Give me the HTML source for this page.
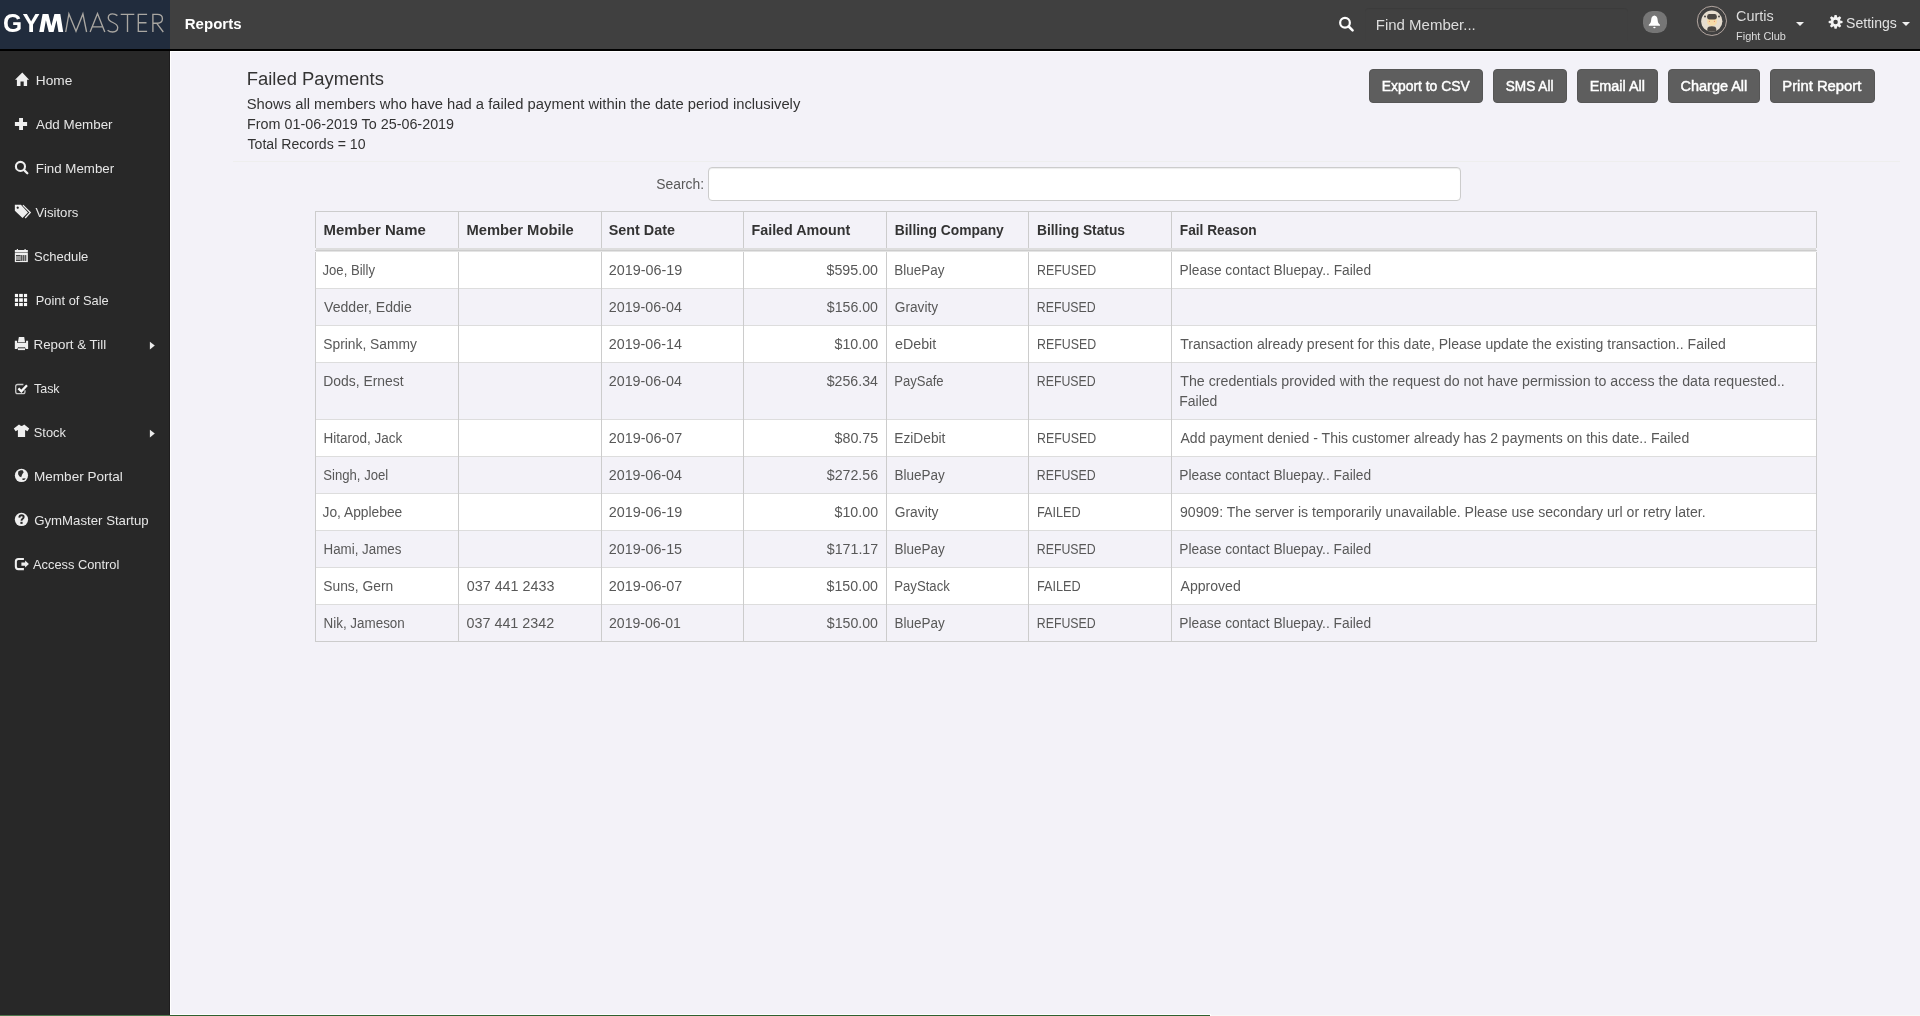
<!DOCTYPE html>
<html lang="en"><head><meta charset="utf-8"><title>GymMaster - Reports</title>
<style>
html,body{margin:0;padding:0;}
body{width:1920px;height:1016px;overflow:hidden;position:relative;background:#f3f2f8;font-family:"Liberation Sans",sans-serif;}
.bx{position:absolute;}
.t{position:absolute;white-space:nowrap;line-height:20px;transform-origin:0 0;font-family:"Liberation Sans",sans-serif;}
.btn{position:absolute;top:69px;height:34px;background:#5e5e5e;border:1px solid #565656;box-sizing:border-box;border-radius:4px;}
svg{position:absolute;overflow:visible;}
</style></head><body>
<!-- top bar -->
<div class="bx" style="left:0;top:0;width:1920px;height:49px;background:#404040"></div>
<div class="bx" style="left:0;top:0;width:170px;height:49px;background:#212c3d"></div>
<div class="bx" style="left:0;top:49px;width:1920px;height:2px;background:#000"></div>
<!-- sidebar -->
<div class="bx" style="left:0;top:51px;width:170px;height:965px;background:#282828"></div>
<div class="bx" style="left:169px;top:51px;width:1px;height:965px;background:#1e1d1e"></div>
<!-- content edges -->
<div class="bx" style="left:170px;top:51px;width:1750px;height:1px;background:#fff"></div>
<div class="bx" style="left:170px;top:51px;width:1px;height:965px;background:#fff"></div>
<!-- bottom strip -->
<div class="bx" style="left:170px;top:1014px;width:1041px;height:1px;background:#fff"></div>
<div class="bx" style="left:1211px;top:1015px;width:709px;height:1px;background:#f8f8f6"></div>
<div class="bx" style="left:0;top:1015px;width:170px;height:1px;background:#4d774d"></div>
<div class="bx" style="left:170px;top:1015px;width:1040px;height:1px;background:#2f5f2f"></div>
<div class="bx" style="left:1210px;top:1015px;width:1px;height:1px;background:#fff"></div>
<!-- hr -->
<div class="bx" style="left:233px;top:161px;width:1667px;height:1px;background:#eee"></div>
<!-- buttons -->
<div class="btn" style="left:1369px;width:114px"></div>
<div class="btn" style="left:1493px;width:74px"></div>
<div class="btn" style="left:1577px;width:81px"></div>
<div class="btn" style="left:1668px;width:92px"></div>
<div class="btn" style="left:1770px;width:105px"></div>
<!-- search input -->
<div class="bx" style="left:708px;top:167px;width:751px;height:32px;background:#fff;border:1px solid #ccc;border-radius:4px;box-shadow:inset 0 1px 1px rgba(0,0,0,.075)"></div>
<div class="bx" id="findbox" style="left:1365px;top:8px;width:263px;height:34px;border-radius:4px;box-shadow:inset 0 1px 1px rgba(0,0,0,.075)"></div>
<!-- bell -->
<div class="bx" style="left:1643px;top:11px;width:24px;height:22px;background:#767676;border-radius:9.5px"></div>
<!-- table -->
<div class="bx" style="left:316px;top:252px;width:1500px;height:36px;background:#fff"></div>
<div class="bx" style="left:316px;top:326px;width:1500px;height:36px;background:#fff"></div>
<div class="bx" style="left:316px;top:420px;width:1500px;height:36px;background:#fff"></div>
<div class="bx" style="left:316px;top:494px;width:1500px;height:36px;background:#fff"></div>
<div class="bx" style="left:316px;top:568px;width:1500px;height:36px;background:#fff"></div>
<div class="bx" style="left:315px;top:211px;width:1502px;height:1px;background:#ccc"></div>
<div class="bx" style="left:316px;top:248px;width:1500px;height:2px;background:#ddd"></div>
<div class="bx" style="left:315px;top:250px;width:1502px;height:1px;background:#ccc"></div>
<div class="bx" style="left:316px;top:251px;width:1500px;height:1px;background:#e4e4e4"></div>
<div class="bx" style="left:316px;top:288px;width:1500px;height:1px;background:#ddd"></div>
<div class="bx" style="left:316px;top:325px;width:1500px;height:1px;background:#ddd"></div>
<div class="bx" style="left:316px;top:362px;width:1500px;height:1px;background:#ddd"></div>
<div class="bx" style="left:316px;top:419px;width:1500px;height:1px;background:#ddd"></div>
<div class="bx" style="left:316px;top:456px;width:1500px;height:1px;background:#ddd"></div>
<div class="bx" style="left:316px;top:493px;width:1500px;height:1px;background:#ddd"></div>
<div class="bx" style="left:316px;top:530px;width:1500px;height:1px;background:#ddd"></div>
<div class="bx" style="left:316px;top:567px;width:1500px;height:1px;background:#ddd"></div>
<div class="bx" style="left:316px;top:604px;width:1500px;height:1px;background:#ddd"></div>
<div class="bx" style="left:315px;top:641px;width:1502px;height:1px;background:#ccc"></div>
<div class="bx" style="left:315px;top:211px;width:1px;height:37px;background:#ccc"></div>
<div class="bx" style="left:315px;top:252px;width:1px;height:389px;background:#ccc"></div>
<div class="bx" style="left:458px;top:211px;width:1px;height:37px;background:#ccc"></div>
<div class="bx" style="left:458px;top:252px;width:1px;height:389px;background:#ccc"></div>
<div class="bx" style="left:601px;top:211px;width:1px;height:37px;background:#ccc"></div>
<div class="bx" style="left:601px;top:252px;width:1px;height:389px;background:#ccc"></div>
<div class="bx" style="left:743px;top:211px;width:1px;height:37px;background:#ccc"></div>
<div class="bx" style="left:743px;top:252px;width:1px;height:389px;background:#ccc"></div>
<div class="bx" style="left:886px;top:211px;width:1px;height:37px;background:#ccc"></div>
<div class="bx" style="left:886px;top:252px;width:1px;height:389px;background:#ccc"></div>
<div class="bx" style="left:1028px;top:211px;width:1px;height:37px;background:#ccc"></div>
<div class="bx" style="left:1028px;top:252px;width:1px;height:389px;background:#ccc"></div>
<div class="bx" style="left:1171px;top:211px;width:1px;height:37px;background:#ccc"></div>
<div class="bx" style="left:1171px;top:252px;width:1px;height:389px;background:#ccc"></div>
<div class="bx" style="left:1816px;top:211px;width:1px;height:37px;background:#ccc"></div>
<div class="bx" style="left:1816px;top:252px;width:1px;height:389px;background:#ccc"></div>
<div id="fg" style="position:absolute;left:0;top:0;width:1920px;height:1016px;will-change:transform">
<svg width="1920" height="1016" viewBox="0 0 1920 1016" style="left:0;top:0">
<text transform="translate(3.04,32.45) scale(0.925,1)" font-family="Liberation Sans, sans-serif" font-weight="700" font-size="26.6" fill="#fff">G</text>
<text transform="translate(22.38,32.0) scale(1.023,1)" font-family="Liberation Sans, sans-serif" font-weight="700" font-size="25.3" fill="#fff">Y</text>
<path d="M39.2 32 L42.6 13.9 L48.4 13.9 L51.35 25.9 L54.4 13.9 L60.3 13.9 L63.2 32 L58.5 32 L56.5 20.3 L53.6 32 L48.8 32 L45.9 20.3 L43.8 32 Z" fill="#fff"/>
<g fill="none" stroke="#aaa7a2" stroke-width="1.35" stroke-linejoin="miter" stroke-linecap="butt">
<path d="M65.7 32 L68.9 13.9 L76 31.2 L82.9 13.9 L86.6 32"/>
<path d="M90.1 32 L97.5 13.6 L104.8 32 M92.4 26.9 H102.6"/>
<path d="M117.4 15.6 C115.9 14.4 114.3 13.9 112.6 13.9 C109.9 13.9 108.3 15.6 108.3 17.8 C108.3 20.3 110.2 21.4 112.8 22.5 C115.8 23.8 117.7 24.9 117.7 27.6 C117.7 30.3 115.6 32 112.7 32 C110.7 32 108.9 31.3 107.6 30.2"/>
<path d="M120.7 14.4 H134.3 M127.5 14.4 V32"/>
<path d="M147.1 14.4 H138.3 V31.4 H147.1 M138.3 22.7 H146.5"/>
<path d="M152.9 32 V14.4 H157.4 C160.6 14.4 162.4 16 162.4 18.8 C162.4 21.6 160.4 23.2 157.4 23.2 H152.9 M156.6 23.2 L163.3 32"/>
</g>
<circle cx="1345" cy="22.8" r="4.85" fill="none" stroke="#fff" stroke-width="2.2"/>
<path d="M1348.7 26.5 L1352.6 30.4" stroke="#fff" stroke-width="2.5" stroke-linecap="round" fill="none"/>
<path d="M1654.4 15.5 C1652.5 15.7 1651.3 17.4 1651.2 19.5 C1651.1 22 1650.4 23.6 1648.8 24.8 L1648.8 25.8 L1660 25.8 L1660 24.8 C1658.4 23.6 1657.7 22 1657.6 19.5 C1657.5 17.4 1656.3 15.7 1654.4 15.5 Z" fill="#fff"/>
<ellipse cx="1654.4" cy="27.5" rx="1.2" ry="0.7" fill="#fff"/>
<circle cx="1711.9" cy="20.9" r="14.6" fill="none" stroke="#b4a7a1" stroke-width="1"/>
<clipPath id="av"><circle cx="1711.8" cy="21.2" r="10.6"/></clipPath>
<g clip-path="url(#av)"><rect x="1700" y="9" width="24" height="24" fill="#e6ddcf"/>
<path d="M1707.2 19 H1716.8 V22.5 C1716.8 24 1714.5 25.8 1712 25.8 C1709.5 25.8 1707.2 24 1707.2 22.5 Z" fill="#f6dba8"/>
<rect x="1707.2" y="14.1" width="9.6" height="5.4" rx="2.2" fill="#4b4743"/>
<circle cx="1705" cy="16.4" r="1" fill="#4b4743"/><circle cx="1719" cy="16.4" r="1" fill="#4b4743"/>
<circle cx="1709.4" cy="21.3" r="0.55" fill="#ec6a55" opacity="0.85"/><circle cx="1714.4" cy="21.3" r="0.55" fill="#ec6a55" opacity="0.85"/>
<path d="M1707.3 33 V29 C1707.3 27 1709.3 26.3 1711.8 26.3 C1714.3 26.3 1716.3 27 1716.3 29 V33 Z" fill="#4b4743"/></g>
<path d="M1796 22 H1804 L1800 26 Z" fill="#f0f0f0"/>
<path d="M1902 22 H1910 L1906 26 Z" fill="#f0f0f0"/>
<path d="M1834.03 17.36 L1834.55 15.03 L1836.65 15.03 L1837.17 17.36 L1837.73 17.59 L1839.75 16.32 L1841.23 17.80 L1839.96 19.82 L1840.19 20.38 L1842.52 20.90 L1842.52 23.00 L1840.19 23.52 L1839.96 24.08 L1841.23 26.10 L1839.75 27.58 L1837.73 26.31 L1837.17 26.54 L1836.65 28.87 L1834.55 28.87 L1834.03 26.54 L1833.47 26.31 L1831.45 27.58 L1829.97 26.10 L1831.24 24.08 L1831.01 23.52 L1828.68 23.00 L1828.68 20.90 L1831.01 20.38 L1831.24 19.82 L1829.97 17.80 L1831.45 16.32 L1833.47 17.59 Z M1837.85 21.95 A2.25 2.25 0 1 0 1833.35 21.95 A2.25 2.25 0 1 0 1837.85 21.95 Z" fill="#f4f4f4" fill-rule="evenodd"/>
<path d="M22.3 72.5 L29.1 79.7 L27.1 79.7 L27.1 86.1 L23.7 86.1 L23.7 81.6 L20.5 81.6 L20.5 86.1 L16.9 86.1 L16.9 79.7 L15 79.7 Z" fill="#efefef"/>
<path d="M19.1 118 H23 V122 H27.1 V126 H23 V130 H19.1 V126 H14.9 V122 H19.1 Z" fill="#efefef"/>
<circle cx="20.45" cy="166.4" r="4.55" fill="none" stroke="#efefef" stroke-width="2.1"/>
<path d="M23.9 169.9 L27.3 173.3" stroke="#efefef" stroke-width="2.3" stroke-linecap="round" fill="none"/>
<path d="M14.85 204.85 H20.9 L27.95 212.5 L22.5 218.1 L14.85 210.7 Z M17.7 206.5 a1.1 1.1 0 1 0 0.01 0 Z" fill="#efefef" fill-rule="evenodd"/>
<path d="M22.9 205.1 L30.3 212.5 L25.2 218" fill="none" stroke="#efefef" stroke-width="1.25"/>
<path d="M14.85 250 H16.8 V249 H18 V250 H24.5 V249 H25.7 V250 H27.85 V252 H14.85 Z" fill="#efefef"/>
<rect x="14.85" y="252" width="13" height="0.9" fill="#8c8c8c"/>
<rect x="14.85" y="252.9" width="13" height="9.2" fill="#efefef"/>
<rect x="16" y="255.1" width="10.6" height="5.8" fill="#9a9a9a"/>
<rect x="21.0" y="255.1" width="0.8" height="5.8" fill="#444"/>
<rect x="23.05" y="255.1" width="0.8" height="5.8" fill="#444"/>
<rect x="25.1" y="255.1" width="0.8" height="5.8" fill="#444"/>
<rect x="16" y="255.1" width="4.4" height="0.9" fill="#3a3a3a"/><rect x="16" y="260" width="4.4" height="0.9" fill="#3a3a3a"/>
<rect x="14.9" y="293.9" width="3.15" height="3.20" fill="#fafafa"/>
<rect x="14.9" y="298.25" width="3.15" height="3.60" fill="#fafafa"/>
<rect x="14.9" y="302.95" width="3.15" height="3.15" fill="#fafafa"/>
<rect x="19.15" y="293.9" width="3.70" height="3.20" fill="#fafafa"/>
<rect x="19.15" y="298.25" width="3.70" height="3.60" fill="#fafafa"/>
<rect x="19.15" y="302.95" width="3.70" height="3.15" fill="#fafafa"/>
<rect x="23.95" y="293.9" width="3.15" height="3.20" fill="#fafafa"/>
<rect x="23.95" y="298.25" width="3.15" height="3.60" fill="#fafafa"/>
<rect x="23.95" y="302.95" width="3.15" height="3.15" fill="#fafafa"/>
<path d="M18.9 337 H24.2 L25 341.9 H17.9 Z" fill="#efefef"/>
<path d="M17.5 342 H25.6 V342.9 H17.5 Z" fill="#7a7a7a"/>
<path d="M14.85 340.8 H17.1 V342.9 H26.05 V340.8 H28.1 V349 H25.7 L24.9 347 H18.1 L17.3 349 H14.85 Z" fill="#efefef"/>
<path d="M18.2 347 H24.8 V347.9 H18.2 Z" fill="#7a7a7a"/>
<path d="M17.9 348.3 H25 V350.1 H17.9 Z" fill="#efefef"/>
<path d="M23.4 384.5 H17.6 Q15.7 384.5 15.7 386.4 V391.7 Q15.7 393.6 17.6 393.6 H23.1 Q25 393.6 25 391.7 V390.2" fill="none" stroke="#c9c9c9" stroke-width="1.3"/>
<path d="M18.4 388.4 L21.35 391.3 L27 385.2" fill="none" stroke="#fafafa" stroke-width="2.3"/>
<path d="M19 424.6 Q21.6 427.2 24.2 424.6 L29.2 428.5 L27.5 431.2 L25.1 430 L25.1 437.1 L17.9 437.1 L17.9 430 L15.6 431.2 L13.8 428.5 Z" fill="#efefef"/>
<circle cx="21.46" cy="475.46" r="6.6" fill="#efefef"/>
<path d="M18.2 471.5 L20.5 470.3 L22.6 470.2 L23.7 472.2 L22.4 474 L21.8 475.6 L21.2 477.3 L19.5 476.4 L18.1 474.2 Z" fill="#2f2f2f"/>
<path d="M22.3 478.5 L25.8 478.2 L24.3 480.1 L22.6 479.9 Z" fill="#2f2f2f"/>
<circle cx="21.46" cy="519.46" r="6.65" fill="#efefef"/>
<path d="M19.3 517.6 C19.4 516 20.3 515.3 21.6 515.3 C22.9 515.3 23.7 516 23.7 517 C23.7 518.9 21.5 518.7 21.5 520.7" fill="none" stroke="#2a2a2a" stroke-width="1.9"/>
<rect x="20.4" y="521.8" width="2.2" height="2.1" fill="#2a2a2a"/>
<path d="M23.9 558.9 H18.4 Q15.85 558.9 15.85 561.5 V566.5 Q15.85 569.1 18.4 569.1 H23.9" fill="none" stroke="#efefef" stroke-width="2.05"/>
<path d="M21.4 562.4 H25.1 V560.6 L28.9 564.05 L25.1 567.5 V565.7 H21.4 Z" fill="#efefef"/>
<path d="M149.9 341.8 V349.4 L154.8 345.6 Z" fill="#ececec"/>
<path d="M149.9 429.8 V437.4 L154.8 433.6 Z" fill="#ececec"/>
</svg>
<span class="t" id="reports" style="left:184px;top:14px;font-size:15px;color:#ffffff;font-weight:700;transform:translateX(0.75px) scaleX(1.0022);">Reports</span>
<span class="t" id="findm" style="left:1375px;top:15px;font-size:14px;color:#dddddd;transform:translateX(0.75px) scaleX(1.0712);">Find Member...</span>
<span class="t" id="curtis" style="left:1736px;top:6px;font-size:14px;color:#dcdcdc;transform:scaleX(1.0295);">Curtis</span>
<span class="t" id="fclub" style="left:1736px;top:26px;font-size:11px;color:#dcdcdc;transform:scaleX(0.9959);">Fight Club</span>
<span class="t" id="settings" style="left:1846px;top:13px;font-size:14px;color:#e2e2e2;transform:scaleX(1.0060);">Settings</span>
<span class="t" id="sb0" style="left:35px;top:71px;font-size:13px;color:#e6e6e6;transform:translateX(0.75px) scaleX(1.0532);">Home</span>
<span class="t" id="sb1" style="left:36px;top:115px;font-size:13px;color:#e6e6e6;transform:scaleX(1.0284);">Add Member</span>
<span class="t" id="sb2" style="left:35px;top:159px;font-size:13px;color:#e6e6e6;transform:translateX(0.75px) scaleX(1.0246);">Find Member</span>
<span class="t" id="sb3" style="left:35px;top:203px;font-size:13px;color:#e6e6e6;transform:translateX(0.5px) scaleX(1.0117);">Visitors</span>
<span class="t" id="sb4" style="left:34px;top:247px;font-size:13px;color:#e6e6e6;transform:scaleX(1.0029);">Schedule</span>
<span class="t" id="sb5" style="left:35px;top:291px;font-size:13px;color:#e6e6e6;transform:translateX(0.75px) scaleX(0.9896);">Point of Sale</span>
<span class="t" id="sb6" style="left:33px;top:335px;font-size:13px;color:#e6e6e6;transform:translateX(0.5px) scaleX(1.0264);">Report &amp; Till</span>
<span class="t" id="sb7" style="left:34px;top:379px;font-size:13px;color:#e6e6e6;transform:scaleX(0.9565);">Task</span>
<span class="t" id="sb8" style="left:33px;top:423px;font-size:13px;color:#e6e6e6;transform:translateX(0.75px) scaleX(0.9875);">Stock</span>
<span class="t" id="sb9" style="left:34px;top:467px;font-size:13px;color:#e6e6e6;transform:scaleX(1.0418);">Member Portal</span>
<span class="t" id="sb10" style="left:34px;top:511px;font-size:13px;color:#e6e6e6;transform:translateX(0.25px) scaleX(1.0155);">GymMaster Startup</span>
<span class="t" id="sb11" style="left:33px;top:555px;font-size:13px;color:#e6e6e6;transform:scaleX(0.9869);">Access Control</span>
<span class="t" id="h1" style="left:246px;top:69px;font-size:18px;color:#333333;transform:translateX(0.75px) scaleX(1.0233);">Failed Payments</span>
<span class="t" id="p1" style="left:246px;top:94px;font-size:14px;color:#333333;transform:translateX(0.75px) scaleX(1.0553);">Shows all members who have had a failed payment within the date period inclusively</span>
<span class="t" id="p2" style="left:247px;top:114px;font-size:14px;color:#333333;transform:scaleX(1.0246);">From 01-06-2019 To 25-06-2019</span>
<span class="t" id="p3" style="left:247px;top:134px;font-size:14px;color:#333333;transform:translateX(0.5px) scaleX(1.0076);">Total Records = 10</span>
<span class="t" id="b1" style="left:1381px;top:76px;font-size:14px;color:#ffffff;-webkit-text-stroke:0.45px #ffffff;transform:translateX(0.75px) scaleX(0.9920);">Export to CSV</span>
<span class="t" id="b2" style="left:1505px;top:76px;font-size:14px;color:#ffffff;-webkit-text-stroke:0.45px #ffffff;transform:translateX(0.75px) scaleX(0.9728);">SMS All</span>
<span class="t" id="b3" style="left:1589px;top:76px;font-size:14px;color:#ffffff;-webkit-text-stroke:0.45px #ffffff;transform:translateX(0.75px) scaleX(1.0280);">Email All</span>
<span class="t" id="b4" style="left:1680px;top:76px;font-size:14px;color:#ffffff;-webkit-text-stroke:0.45px #ffffff;transform:translateX(0.5px) scaleX(1.0343);">Charge All</span>
<span class="t" id="b5" style="left:1782px;top:76px;font-size:14px;color:#ffffff;-webkit-text-stroke:0.45px #ffffff;transform:translateX(0.25px) scaleX(1.0598);">Print Report</span>
<span class="t" id="search" style="left:656px;top:174px;font-size:14px;color:#585858;transform:translateX(0.25px) scaleX(0.9906);">Search:</span>
<span class="t" id="th0" style="left:323px;top:220px;font-size:14px;color:#333333;font-weight:700;transform:translateX(0.5px) scaleX(1.0687);">Member Name</span>
<span class="t" id="th1" style="left:466px;top:220px;font-size:14px;color:#333333;font-weight:700;transform:translateX(0.5px) scaleX(1.0530);">Member Mobile</span>
<span class="t" id="th2" style="left:608px;top:220px;font-size:14px;color:#333333;font-weight:700;transform:translateX(0.75px) scaleX(1.0252);">Sent Date</span>
<span class="t" id="th3" style="left:751px;top:220px;font-size:14px;color:#333333;font-weight:700;transform:translateX(0.5px) scaleX(1.0201);">Failed Amount</span>
<span class="t" id="th4" style="left:894px;top:220px;font-size:14px;color:#333333;font-weight:700;transform:translateX(0.75px) scaleX(0.9872);">Billing Company</span>
<span class="t" id="th5" style="left:1037px;top:220px;font-size:14px;color:#333333;font-weight:700;transform:scaleX(0.9840);">Billing Status</span>
<span class="t" id="th6" style="left:1179px;top:220px;font-size:14px;color:#333333;font-weight:700;transform:translateX(0.75px) scaleX(0.9795);">Fail Reason</span>
<span class="t" id="n0" style="left:322px;top:260px;font-size:14px;color:#585858;transform:translateX(0.5px) scaleX(0.9372);">Joe, Billy</span>
<span class="t" id="d0" style="left:608px;top:260px;font-size:14px;color:#585858;transform:translateX(0.75px) scaleX(1.0261);">2019-06-19</span>
<span class="t" id="a0" style="left:826px;top:260px;font-size:14px;color:#585858;transform:translateX(0.5px) scaleX(1.0171);">$595.00</span>
<span class="t" id="c0" style="left:894px;top:260px;font-size:14px;color:#585858;transform:translateX(0.25px) scaleX(0.9631);">BluePay</span>
<span class="t" id="s0" style="left:1037px;top:260px;font-size:14px;color:#585858;transform:scaleX(0.8834);">REFUSED</span>
<span class="t" id="r0" style="left:1179px;top:260px;font-size:14px;color:#585858;transform:translateX(0.5px) scaleX(0.9823);">Please contact Bluepay.. Failed</span>
<span class="t" id="n1" style="left:324px;top:297px;font-size:14px;color:#585858;transform:scaleX(1.0071);">Vedder, Eddie</span>
<span class="t" id="d1" style="left:608px;top:297px;font-size:14px;color:#585858;transform:translateX(0.75px) scaleX(1.0213);">2019-06-04</span>
<span class="t" id="a1" style="left:826px;top:297px;font-size:14px;color:#585858;transform:translateX(0.75px) scaleX(1.0129);">$156.00</span>
<span class="t" id="c1" style="left:894px;top:297px;font-size:14px;color:#585858;transform:translateX(0.75px) scaleX(0.9771);">Gravity</span>
<span class="t" id="s1" style="left:1036px;top:297px;font-size:14px;color:#585858;transform:translateX(0.75px) scaleX(0.8813);">REFUSED</span>
<span class="t" id="n2" style="left:323px;top:334px;font-size:14px;color:#585858;transform:translateX(0.25px) scaleX(0.9862);">Sprink, Sammy</span>
<span class="t" id="d2" style="left:608px;top:334px;font-size:14px;color:#585858;transform:translateX(0.75px) scaleX(1.0205);">2019-06-14</span>
<span class="t" id="a2" style="left:834px;top:334px;font-size:14px;color:#585858;transform:translateX(0.5px) scaleX(1.0171);">$10.00</span>
<span class="t" id="c2" style="left:895px;top:334px;font-size:14px;color:#585858;transform:scaleX(1.0185);">eDebit</span>
<span class="t" id="s2" style="left:1037px;top:334px;font-size:14px;color:#585858;transform:scaleX(0.8834);">REFUSED</span>
<span class="t" id="r2" style="left:1180px;top:334px;font-size:14px;color:#585858;transform:translateX(0.25px) scaleX(1.0024);">Transaction already present for this date, Please update the existing transaction.. Failed</span>
<span class="t" id="n3" style="left:323px;top:371px;font-size:14px;color:#585858;transform:translateX(0.25px) scaleX(0.9928);">Dods, Ernest</span>
<span class="t" id="d3" style="left:608px;top:371px;font-size:14px;color:#585858;transform:translateX(0.75px) scaleX(1.0213);">2019-06-04</span>
<span class="t" id="a3" style="left:826px;top:371px;font-size:14px;color:#585858;transform:translateX(0.75px) scaleX(1.0105);">$256.34</span>
<span class="t" id="c3" style="left:894px;top:371px;font-size:14px;color:#585858;transform:translateX(0.25px) scaleX(0.9323);">PaySafe</span>
<span class="t" id="s3" style="left:1036px;top:371px;font-size:14px;color:#585858;transform:translateX(0.75px) scaleX(0.8813);">REFUSED</span>
<span class="t" id="r3" style="left:1180px;top:371px;font-size:14px;color:#585858;transform:translateX(0.25px) scaleX(1.0141);">The credentials provided with the request do not have permission to access the data requested..</span>
<span class="t" id="n4" style="left:323px;top:428px;font-size:14px;color:#585858;transform:translateX(0.5px) scaleX(0.9647);">Hitarod, Jack</span>
<span class="t" id="d4" style="left:608px;top:428px;font-size:14px;color:#585858;transform:translateX(0.75px) scaleX(1.0259);">2019-06-07</span>
<span class="t" id="a4" style="left:834px;top:428px;font-size:14px;color:#585858;transform:translateX(0.5px) scaleX(1.0200);">$80.75</span>
<span class="t" id="c4" style="left:894px;top:428px;font-size:14px;color:#585858;transform:translateX(0.25px) scaleX(0.9811);">EziDebit</span>
<span class="t" id="s4" style="left:1037px;top:428px;font-size:14px;color:#585858;transform:scaleX(0.8834);">REFUSED</span>
<span class="t" id="r4" style="left:1180px;top:428px;font-size:14px;color:#585858;transform:translateX(0.5px) scaleX(1.0031);">Add payment denied - This customer already has 2 payments on this date.. Failed</span>
<span class="t" id="n5" style="left:323px;top:465px;font-size:14px;color:#585858;transform:translateX(0.25px) scaleX(0.9379);">Singh, Joel</span>
<span class="t" id="d5" style="left:608px;top:465px;font-size:14px;color:#585858;transform:translateX(0.75px) scaleX(1.0213);">2019-06-04</span>
<span class="t" id="a5" style="left:826px;top:465px;font-size:14px;color:#585858;transform:translateX(0.75px) scaleX(1.0146);">$272.56</span>
<span class="t" id="c5" style="left:894px;top:465px;font-size:14px;color:#585858;transform:translateX(0.5px) scaleX(0.9652);">BluePay</span>
<span class="t" id="s5" style="left:1036px;top:465px;font-size:14px;color:#585858;transform:translateX(0.75px) scaleX(0.8813);">REFUSED</span>
<span class="t" id="r5" style="left:1179px;top:465px;font-size:14px;color:#585858;transform:translateX(0.25px) scaleX(0.9834);">Please contact Bluepay.. Failed</span>
<span class="t" id="n6" style="left:322px;top:502px;font-size:14px;color:#585858;transform:translateX(0.5px) scaleX(0.9852);">Jo, Applebee</span>
<span class="t" id="d6" style="left:608px;top:502px;font-size:14px;color:#585858;transform:translateX(0.75px) scaleX(1.0261);">2019-06-19</span>
<span class="t" id="a6" style="left:834px;top:502px;font-size:14px;color:#585858;transform:translateX(0.5px) scaleX(1.0171);">$10.00</span>
<span class="t" id="c6" style="left:894px;top:502px;font-size:14px;color:#585858;transform:translateX(0.75px) scaleX(0.9864);">Gravity</span>
<span class="t" id="s6" style="left:1037px;top:502px;font-size:14px;color:#585858;transform:scaleX(0.9071);">FAILED</span>
<span class="t" id="r6" style="left:1180px;top:502px;font-size:14px;color:#585858;transform:scaleX(1.0056);">90909: The server is temporarily unavailable. Please use secondary url or retry later.</span>
<span class="t" id="n7" style="left:323px;top:539px;font-size:14px;color:#585858;transform:translateX(0.5px) scaleX(0.9532);">Hami, James</span>
<span class="t" id="d7" style="left:608px;top:539px;font-size:14px;color:#585858;transform:translateX(0.75px) scaleX(1.0242);">2019-06-15</span>
<span class="t" id="a7" style="left:826px;top:539px;font-size:14px;color:#585858;transform:translateX(0.75px) scaleX(1.0165);">$171.17</span>
<span class="t" id="c7" style="left:894px;top:539px;font-size:14px;color:#585858;transform:translateX(0.5px) scaleX(0.9652);">BluePay</span>
<span class="t" id="s7" style="left:1036px;top:539px;font-size:14px;color:#585858;transform:translateX(0.75px) scaleX(0.8813);">REFUSED</span>
<span class="t" id="r7" style="left:1179px;top:539px;font-size:14px;color:#585858;transform:translateX(0.25px) scaleX(0.9834);">Please contact Bluepay.. Failed</span>
<span class="t" id="n8" style="left:323px;top:576px;font-size:14px;color:#585858;transform:translateX(0.25px) scaleX(0.9880);">Suns, Gern</span>
<span class="t" id="m8" style="left:466px;top:576px;font-size:14px;color:#585858;transform:translateX(0.75px) scaleX(1.0234);">037 441 2433</span>
<span class="t" id="d8" style="left:608px;top:576px;font-size:14px;color:#585858;transform:translateX(0.75px) scaleX(1.0259);">2019-06-07</span>
<span class="t" id="a8" style="left:826px;top:576px;font-size:14px;color:#585858;transform:translateX(0.5px) scaleX(1.0171);">$150.00</span>
<span class="t" id="c8" style="left:894px;top:576px;font-size:14px;color:#585858;transform:translateX(0.25px) scaleX(0.9391);">PayStack</span>
<span class="t" id="s8" style="left:1037px;top:576px;font-size:14px;color:#585858;transform:scaleX(0.9071);">FAILED</span>
<span class="t" id="r8" style="left:1180px;top:576px;font-size:14px;color:#585858;transform:translateX(0.5px) scaleX(1.0053);">Approved</span>
<span class="t" id="n9" style="left:323px;top:613px;font-size:14px;color:#585858;transform:translateX(0.5px) scaleX(0.9586);">Nik, Jameson</span>
<span class="t" id="m9" style="left:466px;top:613px;font-size:14px;color:#585858;transform:translateX(0.5px) scaleX(1.0246);">037 441 2342</span>
<span class="t" id="d9" style="left:609px;top:613px;font-size:14px;color:#585858;transform:scaleX(1.0035);">2019-06-01</span>
<span class="t" id="a9" style="left:826px;top:613px;font-size:14px;color:#585858;transform:translateX(0.75px) scaleX(1.0129);">$150.00</span>
<span class="t" id="c9" style="left:894px;top:613px;font-size:14px;color:#585858;transform:translateX(0.5px) scaleX(0.9652);">BluePay</span>
<span class="t" id="s9" style="left:1036px;top:613px;font-size:14px;color:#585858;transform:translateX(0.75px) scaleX(0.8813);">REFUSED</span>
<span class="t" id="r9" style="left:1179px;top:613px;font-size:14px;color:#585858;transform:translateX(0.25px) scaleX(0.9834);">Please contact Bluepay.. Failed</span>
<span class="t" id="r3b" style="left:1179px;top:391px;font-size:14px;color:#585858;transform:translateX(0.25px) scaleX(0.9983);">Failed</span>
</div>
</body></html>
